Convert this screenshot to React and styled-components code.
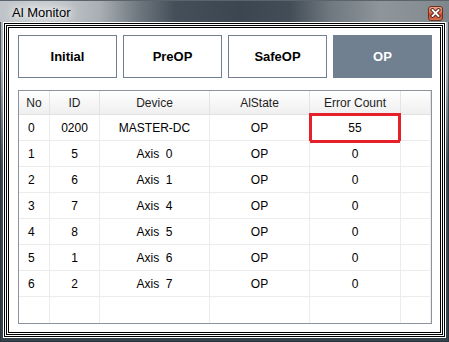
import React from 'react';
import styled, { createGlobalStyle } from 'styled-components';

const Global = createGlobalStyle`
  html, body { margin: 0; padding: 0; background: #ffffff; }
  body { font-family: "Liberation Sans", Arial, sans-serif; }
  * { box-sizing: border-box; }
`;

const COLS = '31px 50px 110px 100px 91px 1fr';

const Window = styled.div`
  width: 449px;
  height: 342px;
  display: flex;
  flex-direction: column;
  background: linear-gradient(180deg, #b6bcc1 0px, #a9afb4 70px, #3d4953 165px, #35414b 100%);
  box-shadow: inset 0 0 0 1px rgba(40, 48, 56, 0.7);
`;

const TitleBar = styled.div`
  height: 22px;
  flex: none;
  display: flex;
  align-items: center;
  justify-content: space-between;
  padding: 0 6px 0 12px;
  background: linear-gradient(90deg, #bfc4c8 0px, #c9cdd1 50px, #a8aeb3 100px, #6d767e 140px, #454f59 175px, #3c4650 240px, #434d57 290px, #6f787f 330px, #8e959b 380px, #878e94 420px, #7e868c 449px);
  border-top: 1px solid #5c646b;
`;

const Title = styled.span`
  font-size: 13px;
  color: #000;
  text-shadow: 0 0 6px #fff, 0 0 10px #fff, 0 0 14px rgba(255, 255, 255, 0.9);
  padding-top: 2px;
`;

const CloseButton = styled.div`
  width: 15px;
  height: 15px;
  margin-top: 3px;
  border: 1px solid #6e2f1e;
  border-radius: 3px;
  background: linear-gradient(180deg, #eca48c 0%, #dc6d4c 45%, #c8482a 55%, #d2704f 100%);
  display: flex;
  align-items: center;
  justify-content: center;
`;

const Body = styled.div`
  flex: 1;
  margin: 0 3px 4px 3px;
  background: #fff;
  box-shadow: inset 0 0 0 1px #fff, inset 0 0 0 2px #000, inset 0 0 0 3px #fff,
    inset 0 0 0 4px #000, inset 0 0 0 5px #fff, inset 0 0 0 6px #000;
  padding: 13px 14px 14px 15px;
  display: flex;
  flex-direction: column;
  gap: 12px;
`;

const ButtonRow = styled.div`
  display: grid;
  grid-template-columns: repeat(4, 1fr);
  gap: 6px;
  height: 43px;
  flex: none;
`;

const StateButton = styled.div`
  border: 1px solid #708090;
  background: ${(p) => (p.$active ? '#708090' : '#ffffff')};
  color: ${(p) => (p.$active ? '#ffffff' : '#000000')};
  font-weight: bold;
  font-size: 13px;
  display: flex;
  align-items: center;
  justify-content: center;
`;

const Table = styled.div`
  flex: 1;
  border: 1px solid #8d939a;
  display: flex;
  flex-direction: column;
  background: #fff;
`;

const HeaderRow = styled.div`
  display: grid;
  grid-template-columns: ${COLS};
  height: 24px;
  flex: none;
  background: linear-gradient(180deg, #ffffff 0%, #f7f7f7 50%, #efefef 100%);
  border-bottom: 1px solid #e2e2e2;
`;

const HeaderCell = styled.div`
  border-right: 1px solid #e4e4e4;
  display: flex;
  align-items: center;
  justify-content: center;
  font-size: 12px;
  color: #1e1e1e;
`;

const Row = styled.div`
  display: grid;
  grid-template-columns: ${COLS};
  height: 26px;
  flex: none;
  border-bottom: 1px solid #ececec;
`;

const FillerRow = styled.div`
  display: grid;
  grid-template-columns: ${COLS};
  flex: 1;
`;

const Cell = styled.div`
  position: relative;
  border-right: 1px solid #ececec;
  display: flex;
  align-items: center;
  justify-content: ${(p) => (p.$left ? 'flex-start' : 'center')};
  padding-left: ${(p) => (p.$left ? '9px' : '0')};
  white-space: pre;
  font-size: 12px;
  color: #000;
`;

const Highlight = styled.span`
  position: absolute;
  top: -2px;
  bottom: -3px;
  left: -1px;
  right: -1px;
  border: 3px solid #e5202b;
  pointer-events: none;
`;

const CloseIcon = () => (
  <svg width="11" height="10" viewBox="0 0 11 10">
    <path d="M2.5 2 L8.5 8 M8.5 2 L2.5 8" stroke="#4a2218" strokeWidth="3.6" strokeLinecap="square" />
    <path d="M2.5 2 L8.5 8 M8.5 2 L2.5 8" stroke="#ffffff" strokeWidth="1.8" strokeLinecap="square" />
  </svg>
);

const states = ['Initial', 'PreOP', 'SafeOP', 'OP'];
const headers = ['No', 'ID', 'Device', 'AlState', 'Error Count', ''];
const rows = [
  ['0', '0200', 'MASTER-DC', 'OP', '55'],
  ['1', '5', 'Axis  0', 'OP', '0'],
  ['2', '6', 'Axis  1', 'OP', '0'],
  ['3', '7', 'Axis  4', 'OP', '0'],
  ['4', '8', 'Axis  5', 'OP', '0'],
  ['5', '1', 'Axis  6', 'OP', '0'],
  ['6', '2', 'Axis  7', 'OP', '0'],
];

export default function App() {
  return (
    <>
      <Global />
      <Window>
        <TitleBar>
          <Title>Al Monitor</Title>
          <CloseButton>
            <CloseIcon />
          </CloseButton>
        </TitleBar>
        <Body>
          <ButtonRow>
            {states.map((s) => (
              <StateButton key={s} $active={s === 'OP'}>
                {s}
              </StateButton>
            ))}
          </ButtonRow>
          <Table>
            <HeaderRow>
              {headers.map((h, i) => (
                <HeaderCell key={i}>{h}</HeaderCell>
              ))}
            </HeaderRow>
            {rows.map((r, ri) => (
              <Row key={ri}>
                <Cell $left>{r[0]}</Cell>
                <Cell>{r[1]}</Cell>
                <Cell>{r[2]}</Cell>
                <Cell>{r[3]}</Cell>
                <Cell>
                  {r[4]}
                  {ri === 0 && <Highlight />}
                </Cell>
                <Cell />
              </Row>
            ))}
            <FillerRow>
              {headers.map((_, i) => (
                <Cell key={i} />
              ))}
            </FillerRow>
          </Table>
        </Body>
      </Window>
    </>
  );
}
